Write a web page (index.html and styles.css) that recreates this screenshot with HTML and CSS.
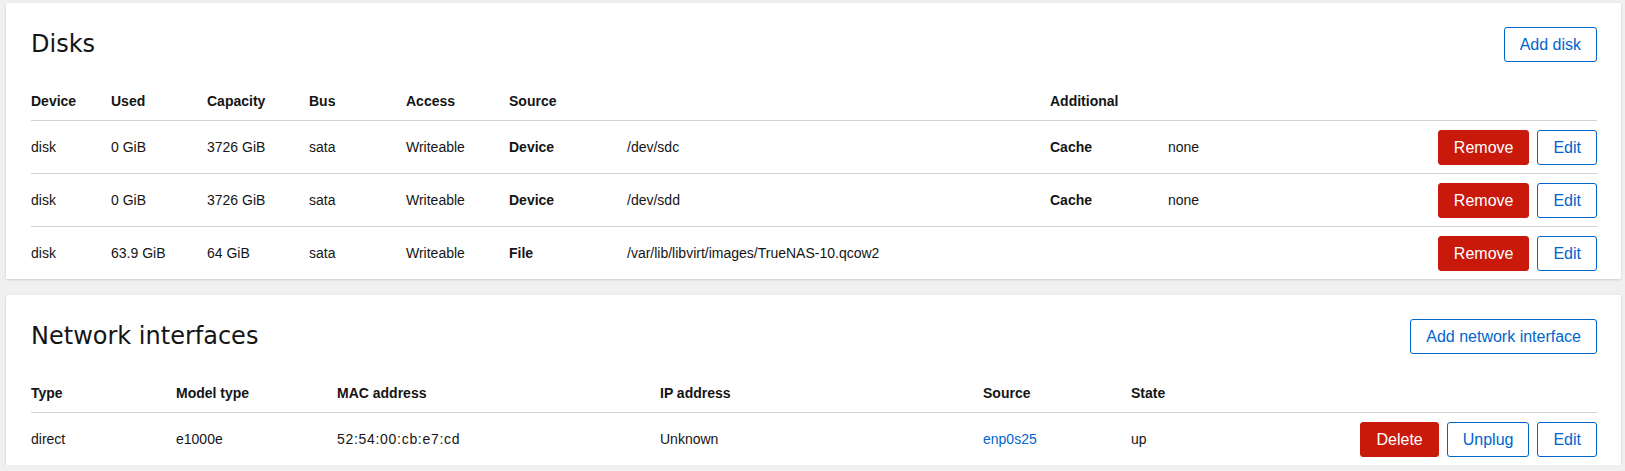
FILE: index.html
```html
<!DOCTYPE html>
<html lang="en">
<head>
<meta charset="utf-8">
<title>VM details</title>
<link rel="stylesheet" href="styles.css">
</head>
<body>
<main class="page">
  <section class="card">
    <header class="card-header">
      <h2 class="card-title">Disks</h2>
      <button class="btn btn-secondary">Add disk</button>
    </header>
    <table class="tbl disks">
      <colgroup>
        <col class="c-device"><col class="c-used"><col class="c-cap"><col class="c-bus"><col class="c-access"><col class="c-source"><col class="c-add"><col class="c-act">
      </colgroup>
      <thead>
        <tr><th>Device</th><th>Used</th><th>Capacity</th><th>Bus</th><th>Access</th><th>Source</th><th>Additional</th><th></th></tr>
      </thead>
      <tbody>
        <tr>
          <td>disk</td><td>0 GiB</td><td>3726 GiB</td><td>sata</td><td>Writeable</td>
          <td><div class="dl"><span class="dt">Device</span><span class="dd">/dev/sdc</span></div></td>
          <td><div class="dl"><span class="dt">Cache</span><span class="dd">none</span></div></td>
          <td><div class="actions"><button class="btn btn-danger">Remove</button><button class="btn btn-secondary">Edit</button></div></td>
        </tr>
        <tr>
          <td>disk</td><td>0 GiB</td><td>3726 GiB</td><td>sata</td><td>Writeable</td>
          <td><div class="dl"><span class="dt">Device</span><span class="dd">/dev/sdd</span></div></td>
          <td><div class="dl"><span class="dt">Cache</span><span class="dd">none</span></div></td>
          <td><div class="actions"><button class="btn btn-danger">Remove</button><button class="btn btn-secondary">Edit</button></div></td>
        </tr>
        <tr>
          <td>disk</td><td>63.9 GiB</td><td>64 GiB</td><td>sata</td><td>Writeable</td>
          <td><div class="dl"><span class="dt">File</span><span class="dd">/var/lib/libvirt/images/TrueNAS-10.qcow2</span></div></td>
          <td></td>
          <td><div class="actions"><button class="btn btn-danger">Remove</button><button class="btn btn-secondary">Edit</button></div></td>
        </tr>
      </tbody>
    </table>
  </section>

  <section class="card">
    <header class="card-header">
      <h2 class="card-title">Network interfaces</h2>
      <button class="btn btn-secondary">Add network interface</button>
    </header>
    <table class="tbl nics">
      <colgroup>
        <col class="n-type"><col class="n-model"><col class="n-mac"><col class="n-ip"><col class="n-src"><col class="n-state"><col class="n-act">
      </colgroup>
      <thead>
        <tr><th>Type</th><th>Model type</th><th>MAC address</th><th>IP address</th><th>Source</th><th>State</th><th></th></tr>
      </thead>
      <tbody>
        <tr>
          <td>direct</td><td>e1000e</td><td class="mac">52:54:00:cb:e7:cd</td><td>Unknown</td>
          <td><a class="link" href="#">enp0s25</a></td><td>up</td>
          <td><div class="actions"><button class="btn btn-danger">Delete</button><button class="btn btn-secondary">Unplug</button><button class="btn btn-secondary">Edit</button></div></td>
        </tr>
      </tbody>
    </table>
  </section>
</main>
</body>
</html>
```

FILE: styles.css
```css
* { box-sizing: border-box; }

html, body {
  margin: 0;
  padding: 0;
  background: #f0f0f0;
  font-family: "Liberation Sans", Arial, sans-serif;
  font-size: 14px;
  color: #151515;
}

.page {
  display: flex;
  flex-direction: column;
  gap: 16px;
  padding: 3px 4px 0 6px;
}

.card {
  background: #fff;
  box-shadow: 0 1px 2px 0 rgba(3, 3, 3, 0.12), 0 0 2px 0 rgba(3, 3, 3, 0.06);
  padding: 0 24px 0 25px;
}

.card-header {
  display: flex;
  align-items: center;
  justify-content: space-between;
  padding-top: 24px;
  height: 59px;
}

.card-title {
  margin: 0;
  font-family: "DejaVu Sans", "Liberation Sans", sans-serif;
  font-size: 24px;
  font-weight: 400;
  line-height: 29px;
  color: #151515;
}

.tbl {
  width: 100%;
  border-collapse: separate;
  border-spacing: 0;
  table-layout: fixed;
}

.tbl th {
  text-align: left;
  font-weight: 700;
  font-size: 14px;
  line-height: 21px;
  height: 59px;
  padding: 29px 0 8px;
  border-bottom: 1px solid #d2d2d2;
  white-space: nowrap;
}

.tbl td {
  height: 52px;
  padding: 0;
  line-height: 21px;
  vertical-align: middle;
  white-space: nowrap;
}

.tbl tbody tr + tr td {
  height: 53px;
  border-top: 1px solid #d2d2d2;
}

.mac { letter-spacing: 0.7px; }

.disks .c-device { width: 80px; }
.disks .c-used { width: 96px; }
.disks .c-cap { width: 102px; }
.disks .c-bus { width: 97px; }
.disks .c-access { width: 103px; }
.disks .c-source { width: 541px; }
.disks .c-act { width: 160px; }

.nics .n-type { width: 145px; }
.nics .n-model { width: 161px; }
.nics .n-mac { width: 323px; }
.nics .n-ip { width: 323px; }
.nics .n-src { width: 148px; }
.nics .n-act { width: 240px; }

.dl {
  display: flex;
  align-items: center;
}

.dt {
  width: 118px;
  flex: none;
  font-weight: 700;
}

.dd { flex: none; }

.actions {
  display: flex;
  justify-content: flex-end;
  gap: 8px;
}

.btn {
  font-family: "Liberation Sans", Arial, sans-serif;
  font-size: 16px;
  line-height: 21px;
  padding: 6px 15px;
  border-radius: 3px;
  border: 1px solid transparent;
  background: #fff;
  cursor: pointer;
  white-space: nowrap;
}

.btn-secondary {
  color: #0066cc;
  border-color: #0066cc;
}

.btn-danger {
  color: #fff;
  background: #c9190b;
  border-color: #c9190b;
}

.link {
  color: #0066cc;
  text-decoration: none;
}
```
